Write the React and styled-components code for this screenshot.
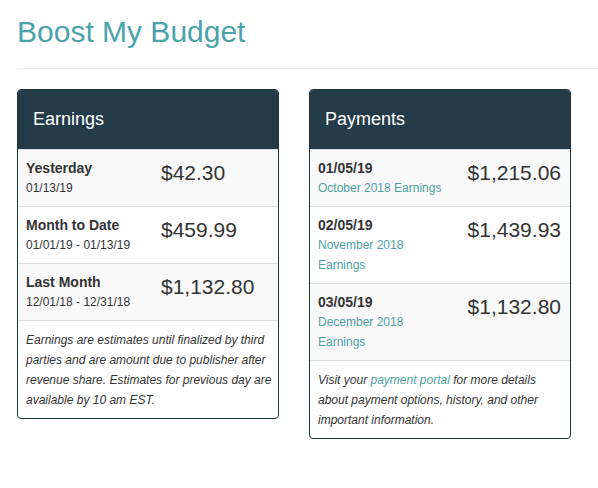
import React from "react";
import styled, { createGlobalStyle } from "styled-components";

const Global = createGlobalStyle`
  html, body { margin: 0; padding: 0; background: #fff; }
  body { font-family: "Liberation Sans", Arial, sans-serif; color: #333; }
`;

const Page = styled.div`
  padding: 15px 0 0 17px;
`;

const Title = styled.h1`
  margin: 0;
  font-size: 30px;
  line-height: 33px;
  font-weight: 400;
  color: #4aa3aa;
`;

const Rule = styled.hr`
  margin: 20px 0 20px;
  border: 0;
  border-top: 1px solid #eee;
`;

const Cards = styled.div`
  display: flex;
  align-items: flex-start;
  gap: 30px;
`;

const Card = styled.section`
  width: 262px;
  box-sizing: border-box;
  border: 1px solid #1f3538;
  border-radius: 4px;
  overflow: hidden;
  background: #fff;
`;

const Header = styled.div`
  height: 59px;
  display: flex;
  align-items: center;
  padding-left: 15px;
  background: #243c4a;
  color: #fff;
  font-size: 18px;
`;

const Row = styled.div`
  display: grid;
  grid-template-columns: ${(p) => p.$col}px 1fr;
  padding: 8px 8px 8px 8px;
  border-top: 1px solid #ddd;
  background: ${(p) => (p.$striped ? "#f9f9f9" : "#fff")};
  &:first-of-type { border-top: 0; }
`;

const Label = styled.div`
  font-size: 14px;
  font-weight: 700;
  line-height: 20px;
  color: #333;
`;

const Sub = styled.div`
  font-size: 12px;
  line-height: 20px;
  color: ${(p) => (p.$teal ? "#4d9fa2" : "#333")};
`;

const Amount = styled.div`
  font-size: 21px;
  line-height: 27px;
  margin-top: 1px;
  color: #333;
  text-align: ${(p) => (p.$right ? "right" : "left")};
  padding-right: ${(p) => (p.$right ? "1px" : "0")};
  white-space: nowrap;
`;

const Note = styled.p`
  margin: 0;
  padding: 9px 2px 8px 8px;
  border-top: 1px solid #ddd;
  font-size: 12px;
  line-height: 20px;
  font-style: italic;
  color: #333;
`;

const Link = styled.a`
  color: #4d9fa2;
  text-decoration: none;
`;

const earnings = [
  { label: "Yesterday", sub: "01/13/19", amount: "$42.30" },
  { label: "Month to Date", sub: "01/01/19 - 01/13/19", amount: "$459.99" },
  { label: "Last Month", sub: "12/01/18 - 12/31/18", amount: "$1,132.80" },
];

const payments = [
  { label: "01/05/19", sub: "October 2018 Earnings", amount: "$1,215.06" },
  { label: "02/05/19", sub: "November 2018 Earnings", amount: "$1,439.93" },
  { label: "03/05/19", sub: "December 2018 Earnings", amount: "$1,132.80" },
];

export default function App() {
  return (
    <Page>
      <Global />
      <Title>Boost My Budget</Title>
      <Rule />
      <Cards>
        <Card>
          <Header>Earnings</Header>
          {earnings.map((r, i) => (
            <Row key={r.label} $col={135} $striped={i % 2 === 0}>
              <div>
                <Label>{r.label}</Label>
                <Sub>{r.sub}</Sub>
              </div>
              <Amount>{r.amount}</Amount>
            </Row>
          ))}
          <Note>
            Earnings are estimates until finalized by third parties and are amount due to
            publisher after revenue share. Estimates for previous day are available by 10 am EST.
          </Note>
        </Card>
        <Card>
          <Header>Payments</Header>
          {payments.map((r, i) => (
            <Row key={r.label} $col={130} $striped={i % 2 === 0}>
              <div>
                <Label>{r.label}</Label>
                <Sub $teal>{r.sub}</Sub>
              </div>
              <Amount $right>{r.amount}</Amount>
            </Row>
          ))}
          <Note>
            Visit your <Link href="#">payment portal</Link> for more details about payment
            options, history, and other important information.
          </Note>
        </Card>
      </Cards>
    </Page>
  );
}
